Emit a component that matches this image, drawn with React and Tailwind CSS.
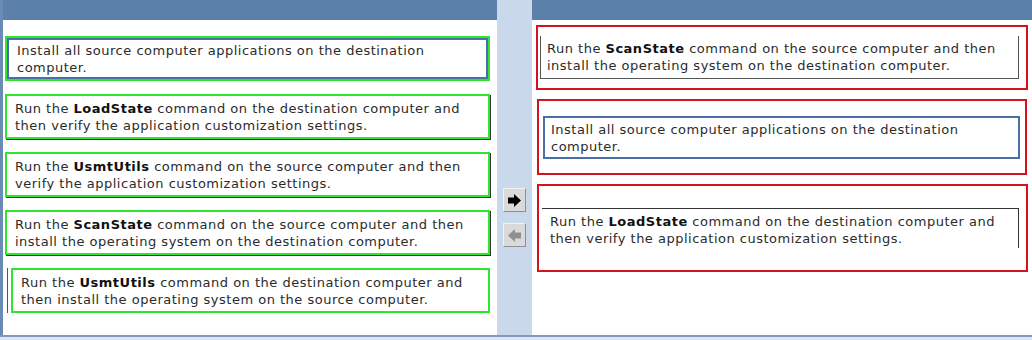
import React from 'react'

const ITEMS = {
  install: [['Install all source computer applications on the destination'], ['computer.']],
  load: [['Run the ', 'LoadState', ' command on the destination computer and'], ['then verify the application customization settings.']],
  usmtSrc: [['Run the ', 'UsmtUtils', ' command on the source computer and then'], ['verify the application customization settings.']],
  scan: [['Run the ', 'ScanState', ' command on the source computer and then'], ['install the operating system on the destination computer.']],
  usmtDst: [['Run the ', 'UsmtUtils', ' command on the destination computer and'], ['then install the operating system on the source computer.']],
}

const LEFT = [
  { id: 'install', style: 'blue' },
  { id: 'load' },
  { id: 'usmtSrc' },
  { id: 'scan' },
  { id: 'usmtDst', style: 'left' },
]

function Text({ lines }) {
  return (
    <div className="text-[13px] leading-[17px] tracking-[0.5px] text-[#2b2b2b] whitespace-nowrap">
      {lines.map((parts, li) => (
        <div key={li}>
          {parts.map((p, i) => (i === 1 ? <b key={i} className="font-bold text-[#111]">{p}</b> : <span key={i}>{p}</span>))}
        </div>
      ))}
    </div>
  )
}

function Arrow({ dir, color }) {
  return (
    <svg width="15" height="15" viewBox="0 0 15 15">
      {dir === 'right' ? (
        <polygon points="1,4.5 7,4.5 7,1 14,7.5 7,14 7,10.5 1,10.5" fill={color} />
      ) : (
        <polygon points="14,4.5 8,4.5 8,1 1,7.5 8,14 8,10.5 14,10.5" fill={color} />
      )}
    </svg>
  )
}

const btn = 'w-[23px] h-[24px] bg-[#dadada] border border-t-[#f2f2f2] border-l-[#f2f2f2] border-r-[#909090] border-b-[#909090] flex items-center justify-center'

export default function App() {
  return (
    <div className="w-[1032px] h-[340px] flex flex-col bg-white overflow-hidden" style={{ fontFamily: '"DejaVu Sans", Verdana, sans-serif' }}>
      <div className="flex h-[335px]">
        {/* left strip */}
        <div className="w-[3px] bg-[#6a8cb4]" />

        {/* left list */}
        <div className="w-[494px] flex flex-col">
          <div className="h-5 bg-[#5b80aa]" />
          <div className="flex-1 bg-white pl-[2px] pt-4 flex flex-col gap-[13px]">
            {LEFT.map(item => (
              <div
                key={item.id}
                className={
                  item.style === 'left'
                    ? 'ml-[6px] w-[479px] h-[45px] border-2 border-[#2ee62e] shadow-[-3px_0_0_#fff,-4px_0_0_#555]'
                    : item.style === 'blue'
                    ? 'w-[485px] h-[45px] border-2 border-[#2ee62e]'
                    : 'w-[485px] h-[45px] border-2 border-[#2ee62e] shadow-[1px_1px_0_#333]'
                }
              >
                <div className={item.style === 'blue' ? 'h-full border-2 border-[#4a6ea8] pl-[8px] pt-[2px]' : 'h-full pl-[8px] pt-[4px]'}>
                  <Text lines={ITEMS[item.id]} />
                </div>
              </div>
            ))}
          </div>
        </div>

        {/* middle buttons */}
        <div className="w-[35px] bg-[#c9d9eb] flex flex-col items-center pt-[188px] gap-[11px]">
          <div className={btn}>
            <Arrow dir="right" color="#000" />
          </div>
          <div className={btn}>
            <Arrow dir="left" color="#8f8f8f" />
          </div>
        </div>

        {/* right targets */}
        <div className="flex-1 flex flex-col">
          <div className="h-5 bg-[#5b80aa]" />
          <div className="flex-1 bg-white pl-[4px] pr-[4px] pt-[5px] flex flex-col gap-[9px]">
            <div className="h-[65px] border-2 border-[#d4141c] pt-[9px] px-[2px]">
              <div className="h-[43px] border-l border-r border-b border-[#555] pl-[6px] pt-[4px] mr-[5px]">
                <Text lines={ITEMS.scan} />
              </div>
            </div>
            <div className="h-[76px] border-2 border-[#d4141c] pt-[15px] px-[4px] ml-[1px] mr-[1px]">
              <div className="h-[43px] border-2 border-[#4a6ea8] pl-[6px] pt-[3px] mr-[1px]">
                <Text lines={ITEMS.install} />
              </div>
            </div>
            <div className="h-[88px] border-2 border-[#d4141c] pt-[22px] px-[3px] ml-[1px]">
              <div className="h-[40px] border-t border-r border-[#333] pl-[8px] pt-[4px] mr-[4px]">
                <Text lines={ITEMS.load} />
              </div>
            </div>
          </div>
        </div>
      </div>
      <div className="h-[2px] bg-[#7d9bc0]" />
      <div className="flex-1 bg-[#dfe7f1]" />
    </div>
  )
}
